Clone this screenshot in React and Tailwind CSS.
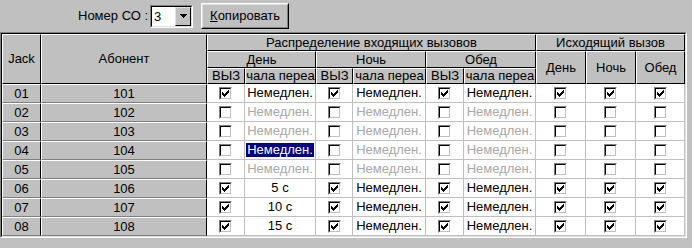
import React from 'react'

const font = { fontFamily: '"Liberation Sans", Arial, sans-serif' }

const rows = [
  { id: '01', num: '101', on: true, day: 'Немедлен.' },
  { id: '02', num: '102', on: false, day: 'Немедлен.' },
  { id: '03', num: '103', on: false, day: 'Немедлен.' },
  { id: '04', num: '104', on: false, day: 'Немедлен.', selected: true },
  { id: '05', num: '105', on: false, day: 'Немедлен.' },
  { id: '06', num: '106', on: true, day: '5 с' },
  { id: '07', num: '107', on: true, day: '10 с' },
  { id: '08', num: '108', on: true, day: '15 с' },
]

const Check = ({ checked }) => (
  <span className="flex h-[13px] w-[13px] border border-t-[#808080] border-l-[#808080] border-r-white border-b-white">
    <span className="flex flex-1 items-center justify-center bg-white border border-t-black border-l-black border-r-[#c0c0c0] border-b-[#c0c0c0]">
      {checked && (
        <svg width="7" height="7" viewBox="0 0 7 7" shapeRendering="crispEdges">
          <path d="M0 2h1v3H0zM1 3h1v3H1zM2 4h1v3H2zM3 3h1v3H3zM4 2h1v3H4zM5 1h1v3H5zM6 0h1v3H6z" fill="#000" />
        </svg>
      )}
    </span>
  </span>
)

const Head = ({ className = '', children }) => (
  <div className={`flex items-center justify-center overflow-hidden whitespace-nowrap bg-[#c0c0c0] border border-t-white border-l-white border-r-black border-b-black ${className}`}>
    {children}
  </div>
)

const Fixed = ({ children }) => (
  <div className="flex items-center justify-center bg-[#c0c0c0] border border-t-white border-l-white border-r-black border-b-[#808080]">
    {children}
  </div>
)

const Cell = ({ children, className = '' }) => (
  <div className={`flex items-center justify-center overflow-hidden whitespace-nowrap bg-white border-r border-b border-[#c0c0c0] ${className}`}>
    {children}
  </div>
)

const Pair = ({ on, text, selected }) => (
  <>
    <Cell><Check checked={on} /></Cell>
    {selected
      ? (
      <Cell className="px-px py-[2px]">
        <span className="flex h-full w-full items-center justify-center bg-[#000080] text-white">{text}</span>
      </Cell>
        )
      : (
      <Cell className={on ? 'text-black' : 'text-[#a8a8a8]'}>{text}</Cell>
        )}
  </>
)

export default function App () {
  return (
    <div className="h-[248px] w-[692px] overflow-hidden bg-[#c0c0c0] text-[13px] text-black" style={font}>
      <div className="flex h-[32px] items-center pl-[78px]">
        <span>Номер СО :</span>
        <div className="ml-[2px] flex h-[23px] w-[43px] border border-t-[#808080] border-l-[#808080] border-r-white border-b-white">
          <div className="flex flex-1 bg-white border border-t-black border-l-black border-r-[#dfdfdf] border-b-[#dfdfdf]">
            <span className="flex-1 pl-[2px] leading-[19px]">3</span>
            <span className="flex w-[16px] items-center justify-center bg-[#c0c0c0] border border-t-[#dfdfdf] border-l-[#dfdfdf] border-r-black border-b-black">
              <svg width="7" height="4" viewBox="0 0 7 4" shapeRendering="crispEdges">
                <path d="M0 0h7v1H0zM1 1h5v1H1zM2 2h3v1H2zM3 3h1v1H3z" fill="#000" />
              </svg>
            </span>
          </div>
        </div>
        <button className="ml-[8px] flex h-[26px] w-[88px] border border-t-white border-l-white border-r-black border-b-black bg-[#c0c0c0]">
          <span className="flex flex-1 items-center justify-center border border-t-[#dfdfdf] border-l-[#dfdfdf] border-r-[#808080] border-b-[#808080]">
            <span><span className="underline">К</span>опировать</span>
          </span>
        </button>
      </div>

      <div className="w-[687px] border border-t-[#808080] border-l-[#808080] border-r-white border-b-white">
        <div className="border border-t-black border-l-black border-r-[#dfdfdf] border-b-[#dfdfdf]">
          <div className="grid grid-cols-[39px_166px_38px_71px_37px_73px_38px_72px_50px_50px_49px] grid-rows-[17px_17px_16px_repeat(8,19px)]">
            <Head className="row-span-3">Jack</Head>
            <Head className="row-span-3">Абонент</Head>
            <Head className="col-span-6">Распределение входящих вызовов</Head>
            <Head className="col-span-3">Исходящий вызов</Head>
            <Head className="col-span-2">День</Head>
            <Head className="col-span-2">Ночь</Head>
            <Head className="col-span-2">Обед</Head>
            <Head className="row-span-2">День</Head>
            <Head className="row-span-2">Ночь</Head>
            <Head className="row-span-2">Обед</Head>
            <Head>ВЫЗ</Head>
            <Head>чала переа</Head>
            <Head>ВЫЗ</Head>
            <Head>чала переа</Head>
            <Head>ВЫЗ</Head>
            <Head>чала переа</Head>

            {rows.map(r => (
              <React.Fragment key={r.id}>
                <Fixed>{r.id}</Fixed>
                <Fixed>{r.num}</Fixed>
                <Pair on={r.on} text={r.day} selected={r.selected} />
                <Pair on={r.on} text="Немедлен." />
                <Pair on={r.on} text="Немедлен." />
                <Cell><Check checked={r.on} /></Cell>
                <Cell><Check checked={r.on} /></Cell>
                <Cell><Check checked={r.on} /></Cell>
              </React.Fragment>
            ))}
          </div>
        </div>
      </div>
    </div>
  )
}
